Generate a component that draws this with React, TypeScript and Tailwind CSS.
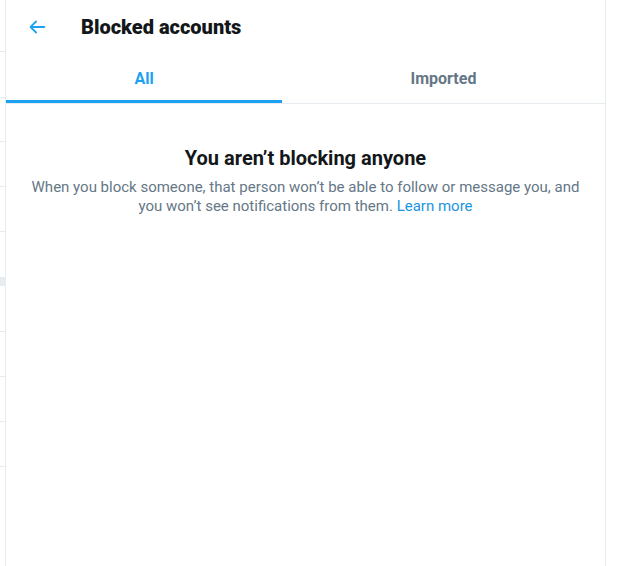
import React from "react";

export default function App() {
  const stripLines = [51, 97, 141, 186, 231, 331, 376, 421, 466];
  return (
    <div className="flex h-[566px] w-[617px] bg-white overflow-hidden" style={{ fontFamily: 'Roboto, "Segoe UI", sans-serif' }}>
      <div className="relative w-[5px] shrink-0">
        {stripLines.map((y) => (
          <div key={y} className="absolute left-0 h-px w-[5px] bg-[#e6ecf0]" style={{ top: y }} />
        ))}
        <div className="absolute left-0 top-[277px] h-[9px] w-[5px] bg-[#e6ecf0]" />
      </div>
      <div className="flex w-[601px] shrink-0 flex-col border-x border-[#e6ecf0]">
        <div className="flex h-[54px] items-center">
          <div className="flex w-[75px] items-center pl-[20px]">
            <svg width="22" height="22" viewBox="0 0 24 24" className="text-[#1da1f2]">
              <path fill="currentColor" d="M20 11H7.414l4.293-4.293c.39-.39.39-1.023 0-1.414s-1.023-.39-1.414 0l-6 6c-.39.39-.39 1.023 0 1.414l6 6c.195.195.45.293.707.293s.512-.098.707-.293c.39-.39.39-1.023 0-1.414L7.414 13H20c.553 0 1-.447 1-1s-.447-1-1-1z" />
            </svg>
          </div>
          <h1 className="text-[20px] font-black text-[#14171a]">Blocked accounts</h1>
        </div>
        <div className="flex h-[50px] border-b border-[#e6ecf0]">
          <div className="relative flex w-[276px] items-center justify-center">
            <span className="text-[16px] font-bold text-[#1da1f2]">All</span>
            <div className="absolute bottom-0 left-0 right-0 h-[3px] bg-[#1da1f2]" />
          </div>
          <div className="flex flex-1 items-center justify-center">
            <span className="text-[16px] font-bold text-[#657786]">Imported</span>
          </div>
        </div>
        <div className="flex flex-col items-center px-[20px] pt-[41px] text-center">
          <h2 className="text-[20px] font-bold leading-[26px] text-[#14171a]">You aren’t blocking anyone</h2>
          <p className="mt-[7px] text-[15px] leading-[19px] text-[#657786]">
            When you block someone, that person won’t be able to follow or message you, and you won’t see notifications from them.{" "}
            <span className="text-[#1b95e0]">Learn more</span>
          </p>
        </div>
      </div>
    </div>
  );
}
